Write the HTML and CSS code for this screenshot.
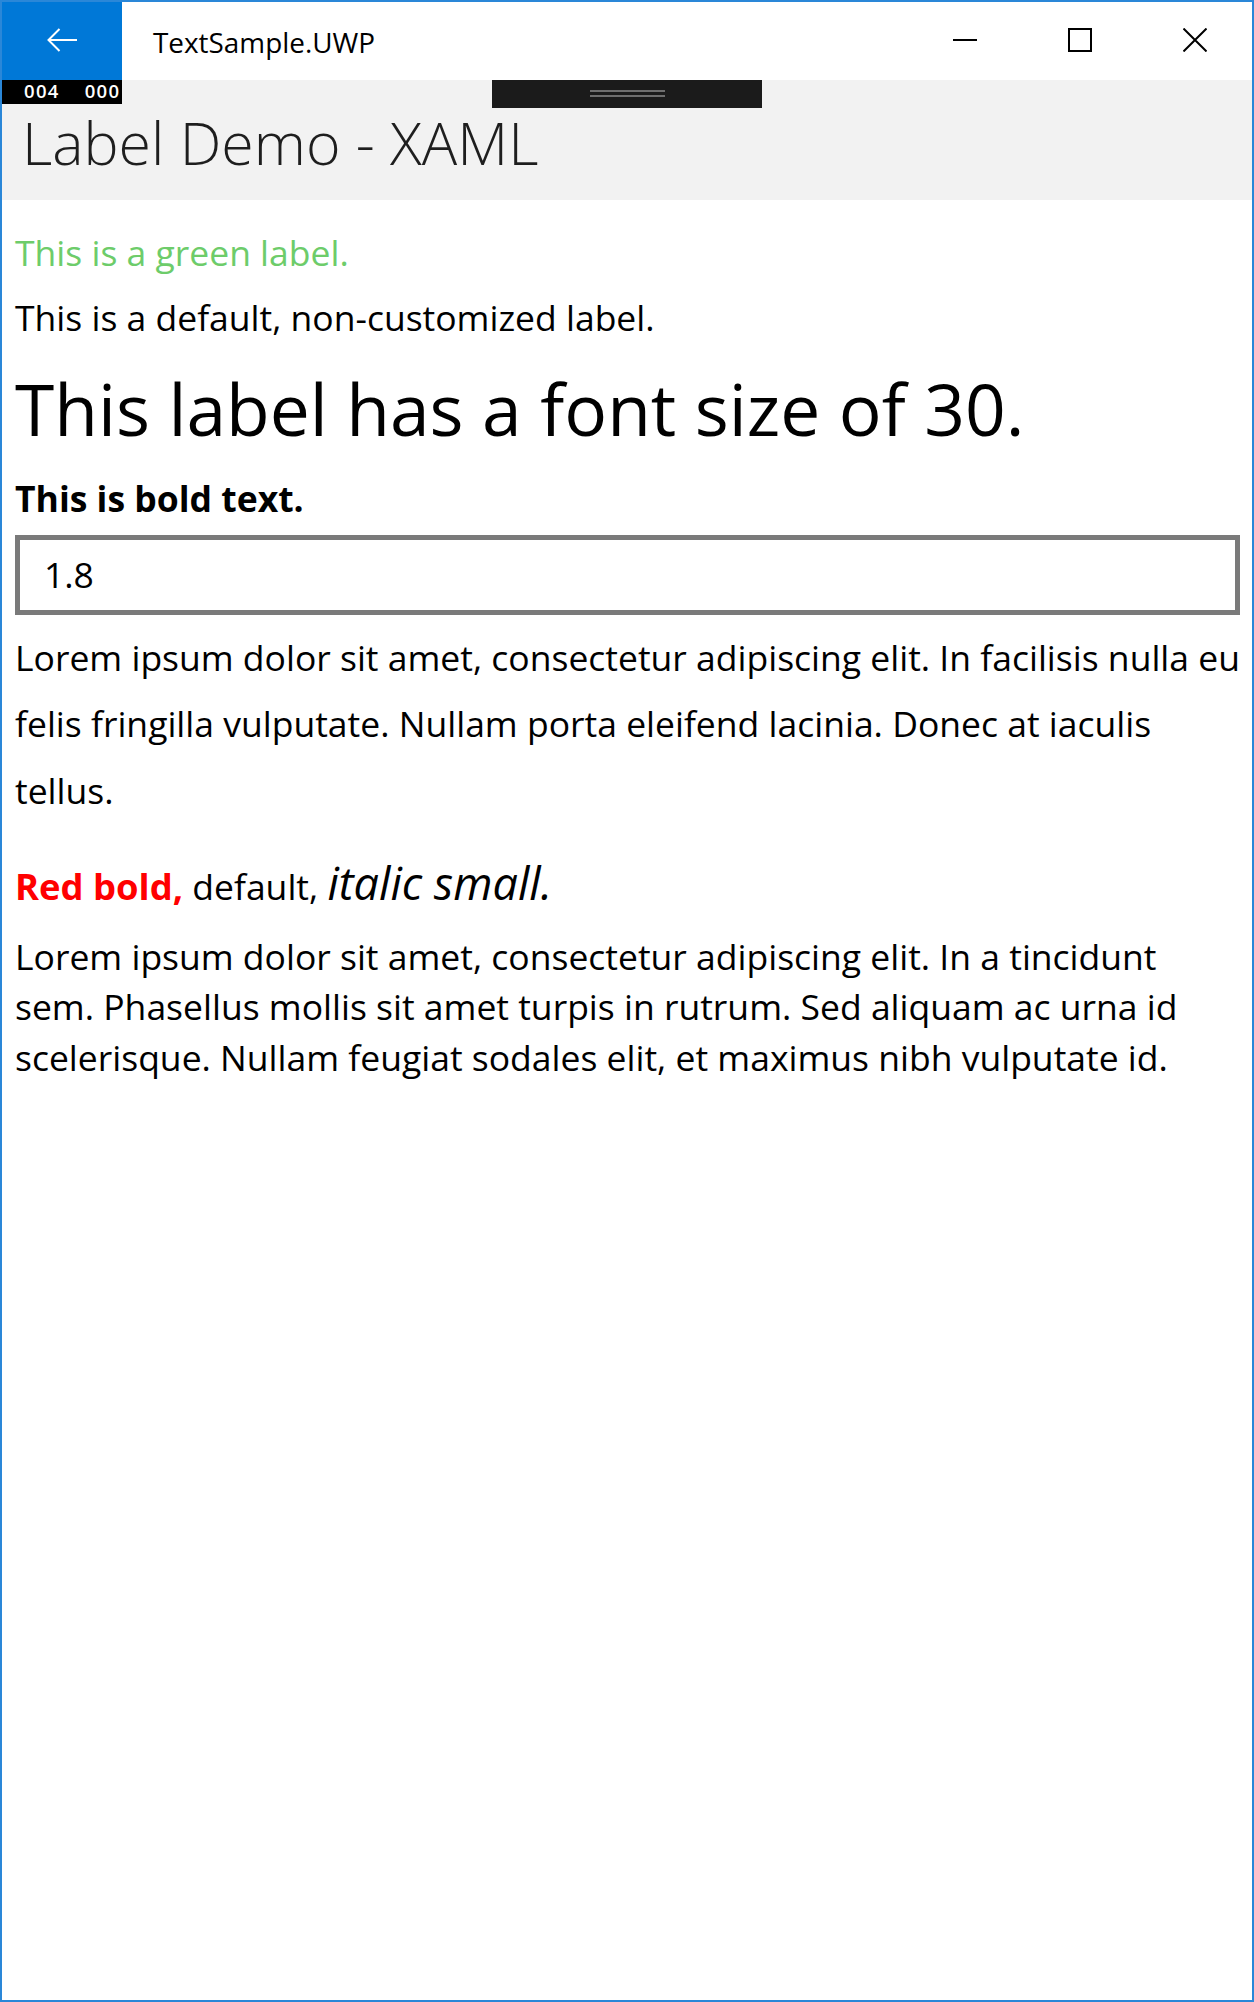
FILE: index.html
```html
<!DOCTYPE html>
<html lang="en">
<head>
<meta charset="utf-8">
<title>TextSample.UWP</title>
<link rel="stylesheet" href="styles.css">
</head>
<body>
<div class="window">
  <div class="titlebar">
    <div class="back">
      <svg width="30" height="24" viewBox="0 0 30 24" aria-hidden="true"><path d="M12.5 1 L1.5 12 L12.5 23 M1.5 12 H30" fill="none" stroke="#fff" stroke-width="2"/></svg>
    </div>
    <div class="apptitle">TextSample.UWP</div>
    <div class="controls">
      <div class="ctl"><svg width="24" height="24" viewBox="0 0 24 24"><path d="M0 12 H24" stroke="#000" stroke-width="2"/></svg></div>
      <div class="ctl"><svg width="24" height="24" viewBox="0 0 24 24"><rect x="1" y="1" width="22" height="22" fill="none" stroke="#000" stroke-width="2"/></svg></div>
      <div class="ctl"><svg width="24" height="24" viewBox="0 0 24 24"><path d="M0.5 0.5 L23.5 23.5 M23.5 0.5 L0.5 23.5" stroke="#000" stroke-width="2"/></svg></div>
    </div>
  </div>
  <div class="pageheader">Label Demo - XAML</div>
  <div class="counter"><span>004</span><span>000</span></div>
  <div class="grip"><i></i><i></i></div>
  <div class="content">
    <div class="lbl green">This is a green label.</div>
    <div class="lbl default">This is a default, non-customized label.</div>
    <div class="lbl large">This label has a font size of 30.</div>
    <div class="lbl bold">This is bold text.</div>
    <div class="entry">1.8</div>
    <div class="para tall">Lorem ipsum dolor sit amet, consectetur adipiscing elit. In facilisis nulla eu<br>felis fringilla vulputate. Nullam porta eleifend lacinia. Donec at iaculis<br>tellus.</div>
    <div class="mixed"><span class="redbold">Red bold,</span> default, <span class="ital">italic small.</span></div>
    <div class="para normal">Lorem ipsum dolor sit amet, consectetur adipiscing elit. In a tincidunt<br>sem. Phasellus mollis sit amet turpis in rutrum. Sed aliquam ac urna id<br>scelerisque. Nullam feugiat sodales elit, et maximus nibh vulputate id.</div>
  </div>
</div>
</body>
</html>
```
FILE: styles.css
```css
* { box-sizing: border-box; }
html, body { margin: 0; padding: 0; background: #fff; }
body { font-family: "Open Sans", "Noto Sans", sans-serif; color: #000; }

.window {
  position: relative;
  width: 1254px;
  height: 2002px;
  border: 2px solid #2a87d8;
  background: #fff;
  overflow: hidden;
}

.titlebar {
  display: flex;
  align-items: center;
  height: 78px;
  background: #fff;
}
.back {
  width: 120px;
  height: 78px;
  background: #0078d7;
  display: flex;
  align-items: center;
  justify-content: center;
  padding-bottom: 2px;
}
.apptitle {
  margin-left: 31px;
  font-size: 27.9px;
  flex: 1;
  line-height: 78px;
  padding-top: 1px;
}
.controls { display: flex; height: 78px; }
.ctl {
  width: 115px;
  height: 78px;
  display: flex;
  align-items: center;
  justify-content: center;
  padding-bottom: 2px;
}

.pageheader {
  height: 120px;
  background: #f2f2f2;
  padding: 4px 0 0 20px;
  font-size: 59px;
  font-weight: 300;
  line-height: 116px;
  color: #1e1e1e;
}

.counter {
  position: absolute;
  left: 0;
  top: 78px;
  width: 120px;
  height: 24px;
  background: #000;
  color: #fff;
  display: flex;
  gap: 25px;
  padding-left: 22px;
  font-size: 18.5px;
  font-weight: 600;
  letter-spacing: 1.3px;
  line-height: 22px;
}
.grip {
  position: absolute;
  left: 490px;
  top: 78px;
  width: 270px;
  height: 28px;
  background: #1b1b1b;
  display: flex;
  flex-direction: column;
  align-items: center;
  gap: 3px;
  padding-top: 10px;
}
.grip i {
  display: block;
  width: 75px;
  height: 2px;
  background: #6e6e6e;
}

.content {
  padding: 0 12px 0 13px;
}
.lbl {
  font-size: 35.5px;
  line-height: 50px;
  white-space: nowrap;
}
.green { color: #6dcc6a; margin-top: 27px; }
.default { margin-top: 15px; }
.large { font-size: 71.3px; line-height: 100px; margin-top: 17.2px; }
.bold { font-weight: 700; margin-top: 13.8px; }

.entry {
  margin: 11.8px 0 0 0;
  height: 80px;
  border: 5px solid #7a7a7a;
  padding: 0 0 0 24px;
  font-size: 35.5px;
  line-height: 68px;
}

.para {
  font-size: 35.5px;
  white-space: nowrap;
}
.tall { line-height: 66.7px; margin-top: 9px; }
.normal { line-height: 50.5px; margin-top: 14.8px; }

.mixed {
  margin-top: 32.1px;
  font-size: 35.5px;
  line-height: 60px;
  white-space: nowrap;
}
.redbold { color: #ff0000; font-weight: 700; font-size: 36.4px; }
.ital { font-style: italic; font-size: 45px; line-height: 1; }
```
